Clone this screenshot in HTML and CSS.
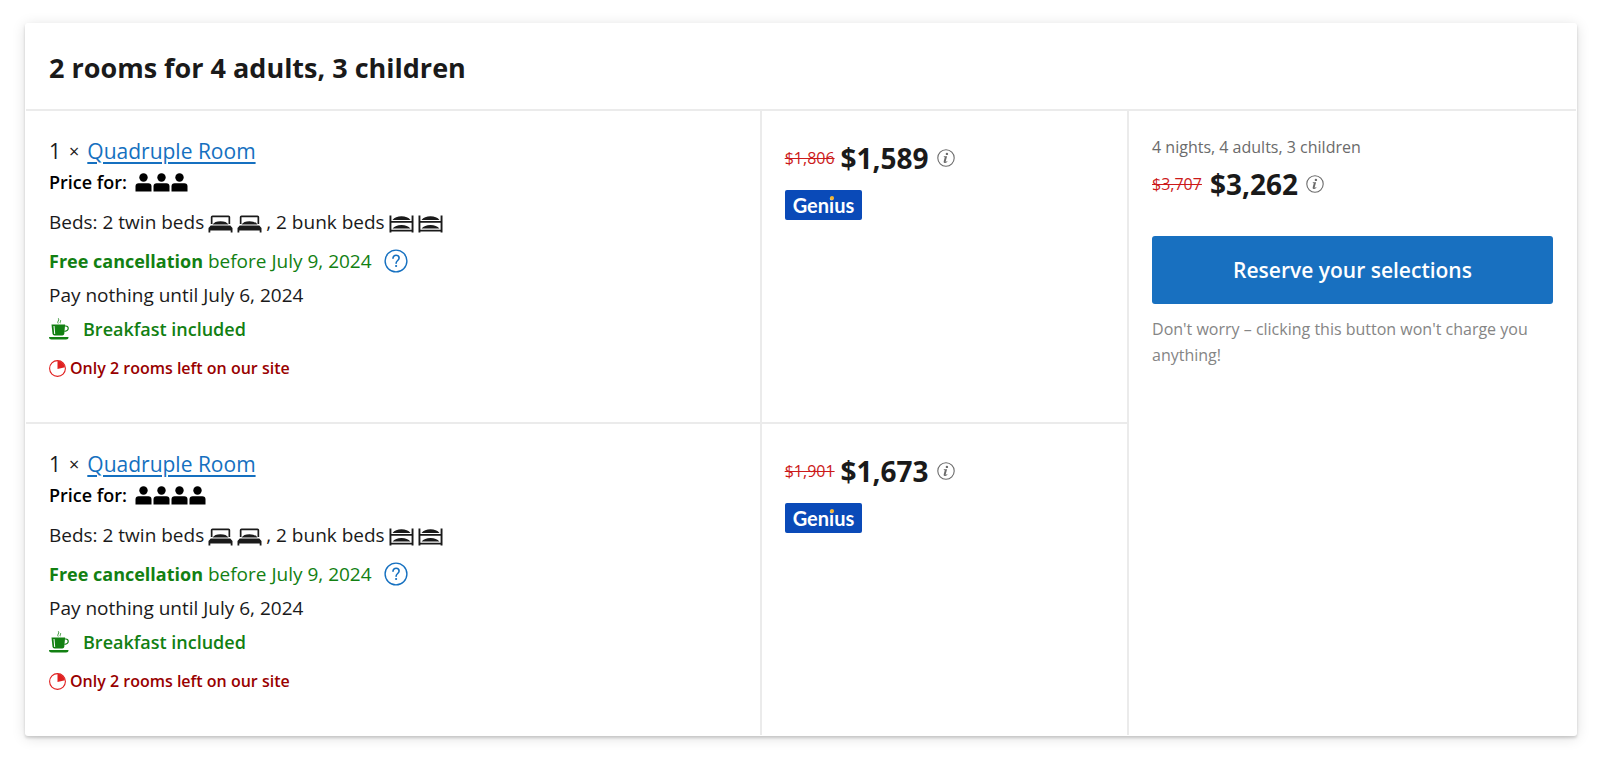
FILE: index.html
```html
<!DOCTYPE html>
<html lang="en">
<head>
    <meta charset="UTF-8">
    <meta name="viewport" content="width=device-width, initial-scale=1.0">
    <title>Room Selection</title>
    <link rel="stylesheet" href="styles.css">
</head>
<body>
    <!-- Shared icons -->
    <svg class="sprite" aria-hidden="true">
        <symbol id="icon-person" viewBox="0 0 17 19">
            <circle cx="8.5" cy="4.5" r="4.2"/>
            <path d="M0.500 18.500V13.500Q0.500 10.300 3.700 10.300h9.600Q16.500 10.300 16.500 13.500v5z"/>
        </symbol>
        <symbol id="icon-twin" viewBox="0 0 24 18">
            <path d="M2.300 9V2Q2.300 0.400 4 0.400h16Q21.700 0.400 21.700 2v7h-1.700V2.300H4V9z"/>
            <path d="M4 9.600Q6 6.200 12 6.200t8 3.400z"/>
            <path d="M0 17.500V13l2.200-2.600h19.600L24 13v4.500h-1.800v-2H1.800v2z"/>
        </symbol>
        <symbol id="icon-bunk" viewBox="0 0 24 18">
            <path d="M0 0.500h1.900v17H0zM22.100 0.500H24v17h-1.900zM1 6h22v1.800H1zM1 14.800h22v1.800H1z"/>
            <path d="M3 5Q6 1.300 12 1.300t9 3.700zM3 13.600Q6 10 12 10t9 3.600z"/>
        </symbol>
        <symbol id="icon-help" viewBox="0 0 24 24">
            <circle cx="12" cy="12" r="10.900" fill="none" stroke="currentColor" stroke-width="1.400"/>
            <path d="M9 9.300c0-1.900 1.300-3 3.100-3s3 1.100 3 2.700c0 2.400-3 2.600-3 5.200" fill="none" stroke="currentColor" stroke-width="1.600" stroke-linecap="round"/>
            <circle cx="12.100" cy="17" r="1.100"/>
        </symbol>
        <symbol id="icon-info" viewBox="0 0 18 18">
            <circle cx="9" cy="9" r="8.200" fill="none" stroke="currentColor" stroke-width="1.100"/>
            <circle cx="9.900" cy="4.900" r="1.200"/>
            <path d="M6.900 7.300h3.200L8.700 12.200q-0.200 0.800 0.400 0.600l1-0.800 0.400 0.400q-1.500 1.700-2.900 1.500-1.300-0.200-0.900-1.700L7.800 8.200l-1.100-0.200z"/>
        </symbol>
        <symbol id="icon-cup" viewBox="0 0 20 22">
            <path d="M9.200 5.500C7.500 3.800 10.800 2.500 9.400 0.300M11.400 5.200c-0.900-1 0.700-1.800 0.200-3" fill="none" stroke="currentColor" stroke-width="0.800"/>
            <path d="M2.500 6.500h13.600l-0.800 9.200q-0.200 1.800-2 1.800H5.500q-1.800 0-2-1.800z"/>
            <path d="M5 8l0.700 8" fill="none" stroke="#fff" stroke-width="1"/>
            <path d="M15.500 8h1.300c1.500 0 2.400 0.800 2.400 2.300s-1.400 2.800-3.800 3" fill="none" stroke="currentColor" stroke-width="1.200"/>
            <path d="M0 19h19.500q0 2.500-2.500 2.500H2.500Q0 21.500 0 19z"/>
        </symbol>
        <symbol id="icon-left" viewBox="0 0 17 17">
            <circle cx="8.500" cy="8.500" r="7.900" fill="none" stroke="currentColor" stroke-width="1.100"/>
            <path d="M8.500 0.800a7.700 7.700 0 0 1 7.500 6.400L8.500 9z"/>
        </symbol>
    </svg>

    <main class="card">
        <h1 class="card-title">2 rooms for 4 adults, 3 children</h1>

        <table class="rooms" aria-label="Selected rooms">
            <tbody>
                <tr>
                    <td class="room">
                        <div class="line room-name">1 <span class="times">×</span> <a href="#">Quadruple Room</a></div>
                        <div class="line guests">Price for:
                            <span class="icons people">
                                <svg><use href="#icon-person"/></svg>
                                <svg><use href="#icon-person"/></svg>
                                <svg><use href="#icon-person"/></svg>
                            </span>
                        </div>
                        <div class="line beds">
                            <span>Beds: 2 twin beds</span>
                            <span class="icons"><svg><use href="#icon-twin"/></svg><svg><use href="#icon-twin"/></svg></span>
                            <span>, 2 bunk beds</span>
                            <span class="icons"><svg><use href="#icon-bunk"/></svg><svg><use href="#icon-bunk"/></svg></span>
                        </div>
                        <div class="line cancel">
                            <span><strong>Free cancellation</strong> before July 9, 2024</span>
                            <button type="button" class="icon-btn help" aria-label="Cancellation details"><svg><use href="#icon-help"/></svg></button>
                        </div>
                        <div class="line pay">Pay nothing until July 6, 2024</div>
                        <div class="line breakfast"><svg><use href="#icon-cup"/></svg>Breakfast included</div>
                        <div class="line left"><svg><use href="#icon-left"/></svg>Only 2 rooms left on our site</div>
                    </td>
                    <td class="price-cell">
                        <div class="price">
                            <del>$1,806</del>
                            <strong>$1,589</strong>
                            <button type="button" class="icon-btn info" aria-label="Price details"><svg><use href="#icon-info"/></svg></button>
                        </div>
                        <div class="genius">Gen<span class="genius-i">i</span>us</div>
                    </td>
                    <td class="summary" rowspan="2">
                        <p class="stay">4 nights, 4 adults, 3 children</p>
                        <div class="price total">
                            <del>$3,707</del>
                            <strong>$3,262</strong>
                            <button type="button" class="icon-btn info" aria-label="Total price details"><svg><use href="#icon-info"/></svg></button>
                        </div>
                        <button type="submit" class="reserve-btn">Reserve your selections</button>
                        <p class="note">Don't worry – clicking this button won't charge you anything!</p>
                    </td>
                </tr>
                <tr>
                    <td class="room">
                        <div class="line room-name">1 <span class="times">×</span> <a href="#">Quadruple Room</a></div>
                        <div class="line guests">Price for:
                            <span class="icons people">
                                <svg><use href="#icon-person"/></svg>
                                <svg><use href="#icon-person"/></svg>
                                <svg><use href="#icon-person"/></svg>
                                <svg><use href="#icon-person"/></svg>
                            </span>
                        </div>
                        <div class="line beds">
                            <span>Beds: 2 twin beds</span>
                            <span class="icons"><svg><use href="#icon-twin"/></svg><svg><use href="#icon-twin"/></svg></span>
                            <span>, 2 bunk beds</span>
                            <span class="icons"><svg><use href="#icon-bunk"/></svg><svg><use href="#icon-bunk"/></svg></span>
                        </div>
                        <div class="line cancel">
                            <span><strong>Free cancellation</strong> before July 9, 2024</span>
                            <button type="button" class="icon-btn help" aria-label="Cancellation details"><svg><use href="#icon-help"/></svg></button>
                        </div>
                        <div class="line pay">Pay nothing until July 6, 2024</div>
                        <div class="line breakfast"><svg><use href="#icon-cup"/></svg>Breakfast included</div>
                        <div class="line left"><svg><use href="#icon-left"/></svg>Only 2 rooms left on our site</div>
                    </td>
                    <td class="price-cell">
                        <div class="price">
                            <del>$1,901</del>
                            <strong>$1,673</strong>
                            <button type="button" class="icon-btn info" aria-label="Price details"><svg><use href="#icon-info"/></svg></button>
                        </div>
                        <div class="genius">Gen<span class="genius-i">i</span>us</div>
                    </td>
                </tr>
            </tbody>
        </table>
    </main>
</body>
</html>
```

FILE: styles.css
```css
* {
    margin: 0;
    padding: 0;
    box-sizing: border-box;
}

body {
    padding: 23px 23px 24px 25px;
    background-color: #fff;
    color: #1a1a1a;
    font-family: 'Segoe UI', 'Open Sans', 'Noto Sans', sans-serif;
    font-size: 19px;
}

svg {
    fill: currentColor;
    flex-shrink: 0;
}

.sprite {
    display: none;
}

.card {
    padding: 0 1px 1px;
    border-radius: 3px;
    box-shadow: 0 2px 3px rgba(0, 0, 0, 0.16), 0 2px 14px rgba(0, 0, 0, 0.13);
}

.card-title {
    padding: 25px 23px 21px;
    border-bottom: 2px solid #ebebeb;
    font-size: 27px;
    font-weight: 700;
    line-height: 40px;
}

/* Rooms table */
.rooms {
    width: 100%;
    table-layout: fixed;
    border-collapse: collapse;
}

td {
    padding: 25px 23px 39px;
    vertical-align: top;
    text-align: left;
}

.room {
    width: 47.4%;
}

.price-cell {
    width: 23.7%;
    border-left: 2px solid #ebebeb;
}

.summary {
    padding-top: 24px;
    border-left: 2px solid #ebebeb;
}

tr + tr td {
    border-top: 2px solid #ebebeb;
}

.line {
    display: flex;
    align-items: center;
    line-height: 30px;
}

.room-name {
    gap: 8px;
    font-size: 21px;
}

.times {
    font-size: 18px;
}

a {
    color: #1570c0;
    text-decoration: underline;
    text-decoration-thickness: 2px;
    text-underline-offset: 3px;
}

.guests {
    gap: 8px;
    margin-top: 1px;
    color: #000;
    font-size: 18px;
    font-weight: 600;
}

.icons {
    display: flex;
    gap: 4px;
}

.people {
    gap: 1px;
}

.people svg {
    width: 17px;
    height: 19px;
}

.beds {
    gap: 4px;
    margin-top: 10px;
}

.beds .icons {
    padding-top: 3px;
}

.beds svg {
    width: 25px;
    height: 18px;
}

.cancel {
    gap: 12px;
    margin-top: 9px;
    color: #128012;
}

.cancel strong {
    font-size: 18px;
}

.icon-btn {
    display: flex;
    border: none;
    background: none;
    cursor: pointer;
}

.help {
    color: #1570c0;
}

.help svg {
    width: 24px;
    height: 24px;
}

.pay {
    margin-top: 4px;
}

.breakfast {
    gap: 14px;
    margin-top: 4px;
    color: #128012;
    font-size: 18px;
    font-weight: 600;
}

.breakfast svg {
    width: 20px;
    height: 22px;
}

.left {
    gap: 4px;
    margin-top: 9px;
    color: #990000;
    font-size: 16px;
    font-weight: 600;
}

.left svg {
    width: 17px;
    height: 17px;
    color: #e02020;
}

/* Prices */
.price {
    display: flex;
    align-items: center;
    gap: 6px;
    line-height: 44px;
}

.price del {
    color: #cc1a1a;
    font-size: 16px;
}

.price strong {
    font-size: 28px;
    font-weight: 700;
}

.info {
    margin-left: 2px;
    color: #6b6b6b;
}

.info svg {
    width: 18px;
    height: 18px;
}

.genius {
    display: inline-block;
    margin-top: 10px;
    padding: 0 8px;
    border-radius: 2px;
    background-color: #0a4ab8;
    color: #fff;
    font-family: Lato, sans-serif;
    font-size: 20px;
    font-weight: 700;
    line-height: 30px;
}

.genius-i {
    position: relative;
}

/* Gold dot on top of the i */
.genius-i::after {
    content: "";
    position: absolute;
    top: 3px;
    left: 50%;
    width: 4px;
    height: 4px;
    margin-left: -2px;
    border-radius: 50%;
    background-color: #f5b52e;
}

/* Summary column */
.stay {
    color: #6b6b6b;
    font-size: 16px;
    line-height: 24px;
}

.total {
    gap: 8px;
    margin-top: 3px;
}

.total .info {
    margin-left: 0;
}

.reserve-btn {
    width: 100%;
    margin-top: 30px;
    padding: 19px;
    border: none;
    border-radius: 3px;
    background-color: #1870c0;
    color: #fff;
    font-family: inherit;
    font-size: 21px;
    font-weight: 600;
    line-height: 30px;
    cursor: pointer;
}

.note {
    margin-top: 12px;
    color: #858585;
    font-size: 16px;
    line-height: 26px;
}
```
